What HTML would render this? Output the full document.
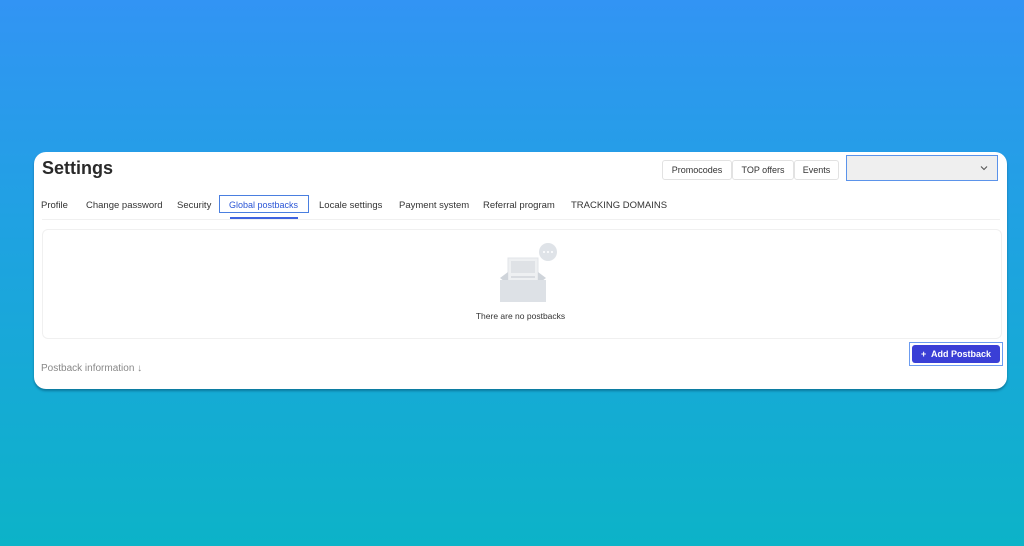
<!DOCTYPE html>
<html><head><style>
html,body{margin:0;padding:0}
body{width:1024px;height:546px;overflow:hidden;background:linear-gradient(180deg,#3294f4 0%,#1ea3e0 45%,#0cb3c8 100%);font-family:"Liberation Sans",sans-serif;position:relative}
.card{position:absolute;left:34px;top:152px;width:973px;height:237px;background:#fff;border-radius:12px;box-shadow:0 2px 2px rgba(0,60,90,.45)}
.title{position:absolute;left:8px;top:6px;font-size:18px;font-weight:bold;color:#2a2a2a}
.tabs{position:absolute;left:7px;top:48px;font-size:9.5px;color:#333;white-space:nowrap}
.tabs span{position:absolute;top:0}
.btn{position:absolute;top:8px;height:18px;border:1px solid #e2e2e2;border-radius:3px;font-size:9px;color:#333;line-height:18px;text-align:center;background:#fff}
.sel{position:absolute;left:812px;top:3px;width:152px;height:26px;background:#efefef;border:1px solid #5b93ea;box-sizing:border-box}
.inner{position:absolute;left:8px;top:77px;width:958px;height:108px;border:1px solid #f0f0f0;border-radius:6px}
</style></head><body>
<div class="card">
<div class="title">Settings</div>
<div class="tabs">
<span style="left:0">Profile</span>
<span style="left:45px">Change password</span>
<span style="left:136px">Security</span>
<span style="left:278px">Locale settings</span>
<span style="left:358px">Payment system</span>
<span style="left:442px">Referral program</span>
<span style="left:530px">TRACKING DOMAINS</span>
</div>
<div style="position:absolute;left:185px;top:43px;width:90px;height:18px;border:1px solid #4a7fe0;box-sizing:border-box"></div>
<div style="position:absolute;left:195px;top:48px;color:#2a55d6;font-size:9px;white-space:nowrap">Global postbacks</div>
<div style="position:absolute;left:196px;top:65px;width:68px;height:2px;background:#3f63e0"></div>
<div style="position:absolute;left:8px;top:67px;width:958px;height:1px;background:#f0f0f0"></div>
<div class="btn" style="left:628px;width:68px">Promocodes</div>
<div class="btn" style="left:698px;width:60px">TOP offers</div>
<div class="btn" style="left:760px;width:43px">Events</div>
<div class="sel"><svg style="position:absolute;right:9px;top:9px" width="8" height="6" viewBox="0 0 8 6"><path d="M1 1.5L4 4.5L7 1.5" stroke="#555" fill="none" stroke-width="1.1"/></svg></div>
<div class="inner"></div>
<svg style="position:absolute;left:462px;top:90px" width="64" height="62" viewBox="0 0 64 62">
<circle cx="52" cy="10" r="9" fill="#dfe3e8"/><circle cx="48" cy="10" r="1" fill="#fff"/><circle cx="52" cy="10" r="1" fill="#fff"/><circle cx="56" cy="10" r="1" fill="#fff"/>
<rect x="12" y="16" width="30" height="34" fill="#eef0f2" stroke="#e2e4e8"/>
<rect x="15" y="19" width="24" height="12" fill="#dfe2e6"/>
<rect x="15" y="34" width="24" height="2" fill="#d8dbe0"/>
<path d="M4 36 L12 30 L12 42 Z M50 36 L42 30 L42 42Z" fill="#cfd4da"/>
<rect x="4" y="38" width="46" height="22" fill="#dde1e6"/>
</svg>
<div style="position:absolute;left:0;width:973px;top:159px;text-align:center;font-size:8.5px;color:#333">There are no postbacks</div>
<div style="position:absolute;left:7px;top:211px;font-size:10px;color:#888">Postback information ↓</div>
<div style="position:absolute;left:875px;top:190px;width:94px;height:24px;border:1px solid #6c9cf0;box-sizing:border-box"></div>
<div style="position:absolute;left:878px;top:193px;width:88px;height:18px;background:#3a3fd6;border-radius:3px;color:#fff;font-size:9px;line-height:18px;text-align:center;font-weight:bold">+&nbsp; Add Postback</div>
</div>
</body></html>
